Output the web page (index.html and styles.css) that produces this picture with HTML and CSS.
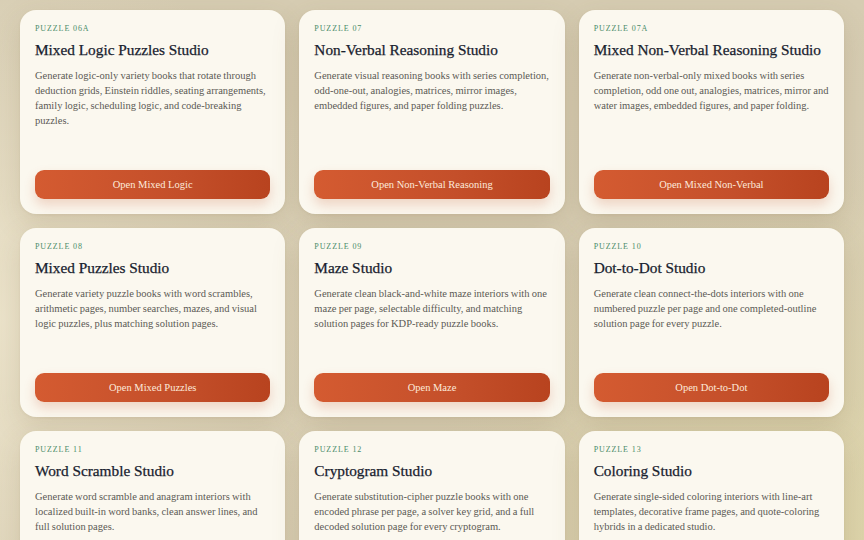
FILE: index.html
```html
<!DOCTYPE html>
<html lang="en">
<head>
    <meta charset="UTF-8">
    <meta name="viewport" content="width=device-width, initial-scale=1.0">
    <title>Puzzle Studios</title>
    <link rel="stylesheet" href="styles.css">
</head>
<body>

<div class="studio-grid">
    <div class="studio-card">
        <div class="studio-tag">Puzzle 06A</div>
        <h2>Mixed Logic Puzzles Studio</h2>
        <p>Generate logic-only variety books that rotate through deduction grids, Einstein riddles, seating arrangements, family logic, scheduling logic, and code-breaking puzzles.</p>
        <button>Open Mixed Logic</button>
    </div>
    <div class="studio-card">
        <div class="studio-tag">Puzzle 07</div>
        <h2>Non-Verbal Reasoning Studio</h2>
        <p>Generate visual reasoning books with series completion, odd-one-out, analogies, matrices, mirror images, embedded figures, and paper folding puzzles.</p>
        <button>Open Non-Verbal Reasoning</button>
    </div>
    <div class="studio-card">
        <div class="studio-tag">Puzzle 07A</div>
        <h2>Mixed Non-Verbal Reasoning Studio</h2>
        <p>Generate non-verbal-only mixed books with series completion, odd one out, analogies, matrices, mirror and water images, embedded figures, and paper folding.</p>
        <button>Open Mixed Non-Verbal</button>
    </div>

    <div class="studio-card">
        <div class="studio-tag">Puzzle 08</div>
        <h2>Mixed Puzzles Studio</h2>
        <p>Generate variety puzzle books with word scrambles, arithmetic pages, number searches, mazes, and visual logic puzzles, plus matching solution pages.</p>
        <button>Open Mixed Puzzles</button>
    </div>
    <div class="studio-card">
        <div class="studio-tag">Puzzle 09</div>
        <h2>Maze Studio</h2>
        <p>Generate clean black-and-white maze interiors with one maze per page, selectable difficulty, and matching solution pages for KDP-ready puzzle books.</p>
        <button>Open Maze</button>
    </div>
    <div class="studio-card">
        <div class="studio-tag">Puzzle 10</div>
        <h2>Dot-to-Dot Studio</h2>
        <p>Generate clean connect-the-dots interiors with one numbered puzzle per page and one completed-outline solution page for every puzzle.</p>
        <button>Open Dot-to-Dot</button>
    </div>

    <div class="studio-card">
        <div class="studio-tag">Puzzle 11</div>
        <h2>Word Scramble Studio</h2>
        <p>Generate word scramble and anagram interiors with localized built-in word banks, clean answer lines, and full solution pages.</p>
        <button>Open Word Scramble</button>
    </div>
    <div class="studio-card">
        <div class="studio-tag">Puzzle 12</div>
        <h2>Cryptogram Studio</h2>
        <p>Generate substitution-cipher puzzle books with one encoded phrase per page, a solver key grid, and a full decoded solution page for every cryptogram.</p>
        <button>Open Cryptogram</button>
    </div>
    <div class="studio-card">
        <div class="studio-tag">Puzzle 13</div>
        <h2>Coloring Studio</h2>
        <p>Generate single-sided coloring interiors with line-art templates, decorative frame pages, and quote-coloring hybrids in a dedicated studio.</p>
        <button>Open Coloring</button>
    </div>
</div>

</body>
</html>
```

FILE: styles.css
```css
body {
    margin: 0;
    padding: 10px 20px 20px;
    font-family: "Liberation Serif", "DejaVu Serif", serif;
    background:
        radial-gradient(circle at 0% 50%, rgba(240, 232, 208, 0.8), transparent 40%),
        radial-gradient(circle at 100% 100%, rgba(222, 214, 160, 0.7), transparent 45%),
        linear-gradient(180deg, #d6ccb2, #dcd2b7);
    min-height: 100vh;
    box-sizing: border-box;
}

.studio-grid {
    display: grid;
    grid-template-columns: repeat(3, 1fr);
    gap: 14px;
}

.studio-card {
    background-color: #fbf8ef;
    border-radius: 16px;
    padding: 14px 15px 15px;
    display: flex;
    flex-direction: column;
    box-shadow: 0 10px 28px rgba(120, 100, 60, 0.18), 0 1px 3px rgba(120, 100, 60, 0.08);
}

.studio-tag {
    font-size: 8px;
    line-height: 10px;
    letter-spacing: 0.9px;
    text-transform: uppercase;
    color: #4a8c69;
}

.studio-card h2 {
    margin: 6px 0 0;
    font-size: 15.3px;
    line-height: 20px;
    font-weight: normal;
    color: #18212e;
    -webkit-text-stroke: 0.25px #18212e;
}

.studio-card p {
    margin: 8px 0 42px;
    font-size: 10.5px;
    line-height: 15px;
    word-spacing: -0.4px;
    color: #5c5a55;
}

.studio-card button {
    margin-top: auto;
    height: 29px;
    border: none;
    border-radius: 9px;
    font-family: inherit;
    font-size: 10.5px;
    color: #fdeadb;
    background: linear-gradient(90deg, #d45b31, #c44f2a 60%, #b8431f);
    box-shadow: 0 6px 12px rgba(196, 80, 40, 0.22);
    cursor: pointer;
}
```
